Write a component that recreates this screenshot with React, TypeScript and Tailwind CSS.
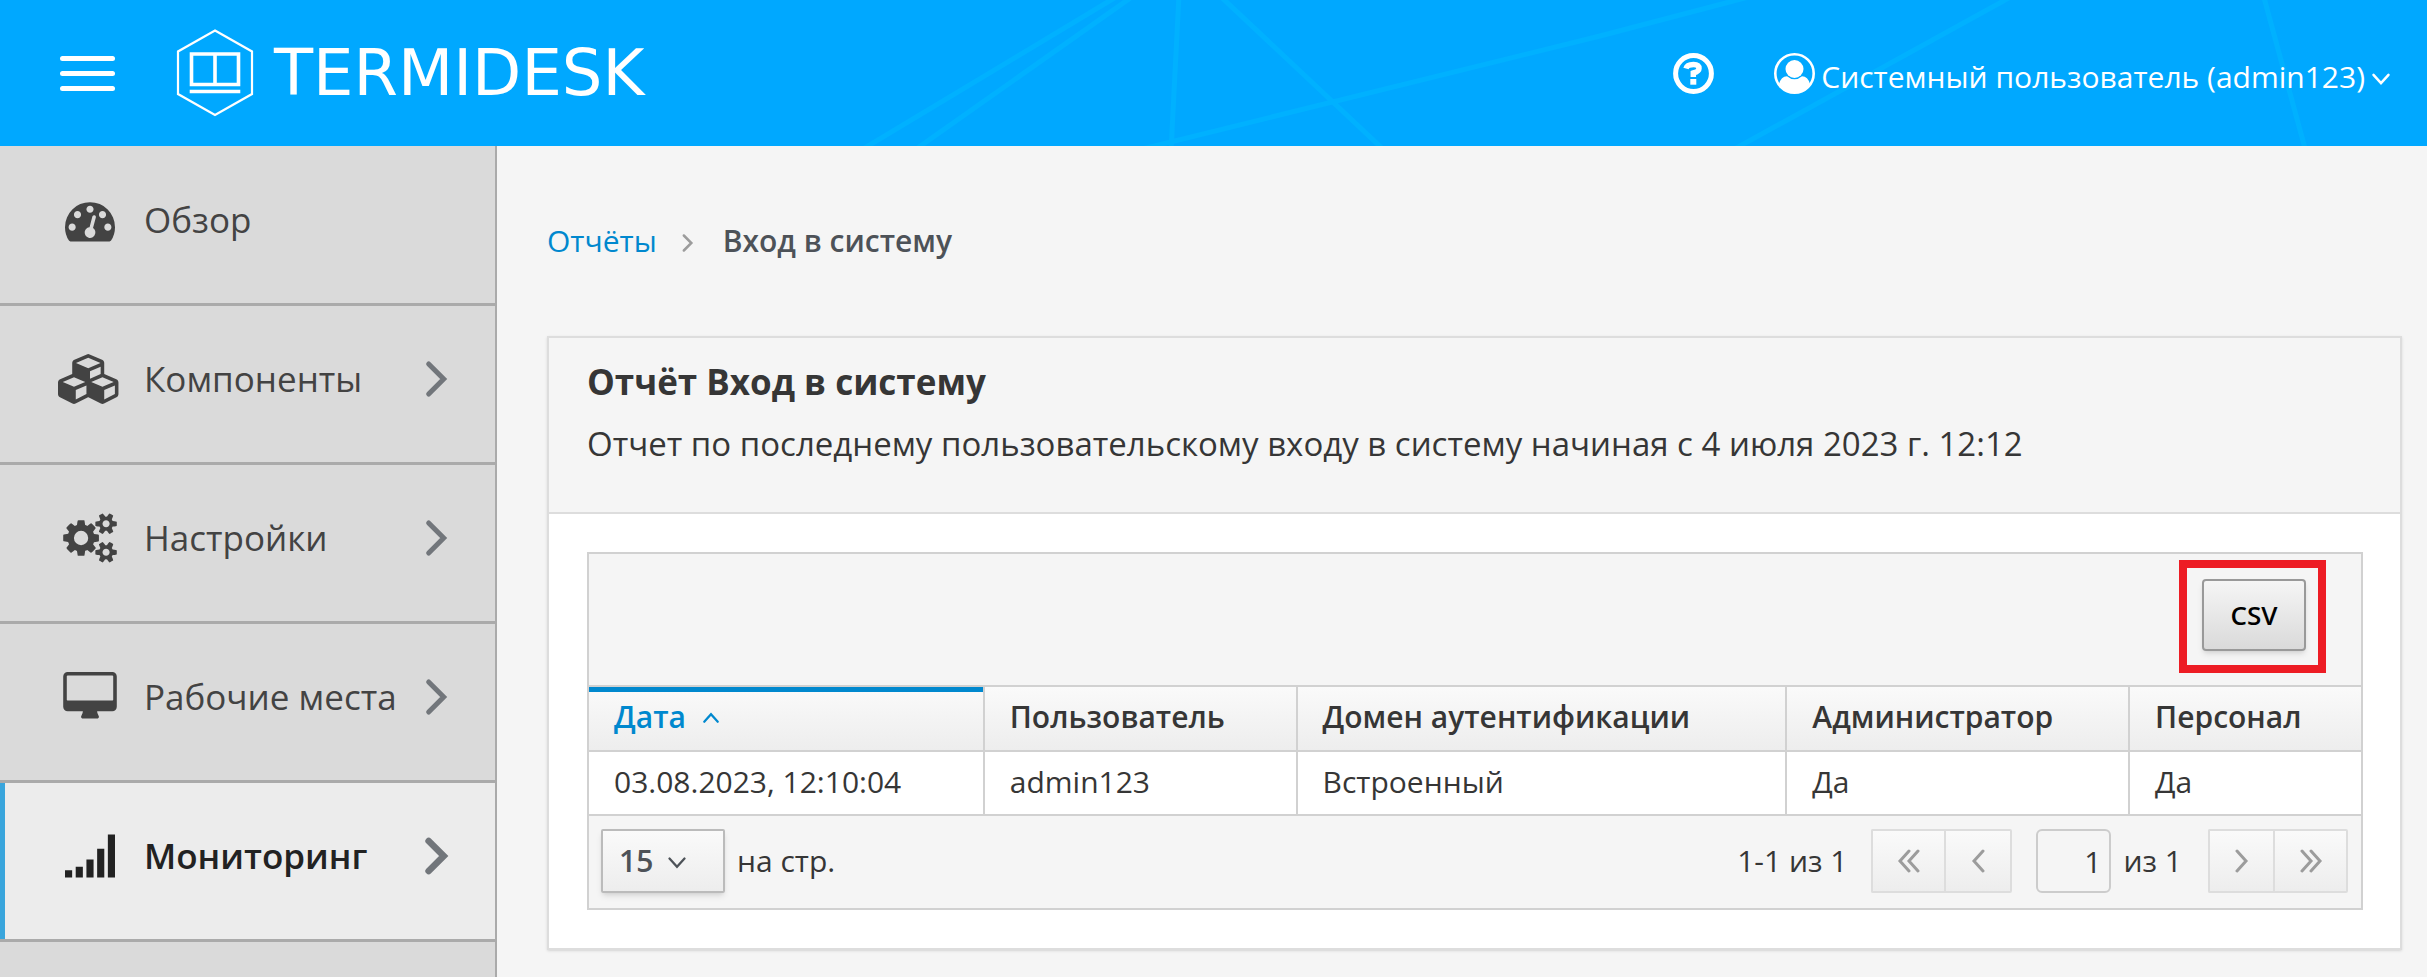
import { ReactNode } from 'react';
import clsx from 'clsx';

interface MenuItem {
  title: string;
  viewBox: string;
  iconWidth: string;
  path: string;
  hasSubmenu: boolean;
  active?: boolean;
}

const menu: MenuItem[] = [
  {
    title: 'Обзор',
    viewBox: '0 0 1792 1792',
    iconWidth: 'w-[50px]',
    path: 'M384 1152q0-53-37.5-90.5t-90.5-37.5-90.5 37.5-37.5 90.5 37.5 90.5 90.5 37.5 90.5-37.5 37.5-90.5zm192-448q0-53-37.5-90.5t-90.5-37.5-90.5 37.5-37.5 90.5 37.5 90.5 90.5 37.5 90.5-37.5 37.5-90.5zm428 481l101-382q6-26-7.5-48.5t-38.5-29.5-48 6.5-30 39.5l-101 382q-60 5-107 43.5t-63 98.5q-20 77 20 146t117 89 146-20 89-117q16-60-6-117t-72-91zm660-33q0-53-37.5-90.5t-90.5-37.5-90.5 37.5-37.5 90.5 37.5 90.5 90.5 37.5 90.5-37.5 37.5-90.5zm-640-640q0-53-37.5-90.5t-90.5-37.5-90.5 37.5-37.5 90.5 37.5 90.5 90.5 37.5 90.5-37.5 37.5-90.5zm448 192q0-53-37.5-90.5t-90.5-37.5-90.5 37.5-37.5 90.5 37.5 90.5 90.5 37.5 90.5-37.5 37.5-90.5zm320 448q0 261-141 483-19 29-54 29h-1402q-35 0-54-29-141-221-141-483 0-182 71-348t191-286 286-191 348-71 348 71 286 191 191 286 71 348z',
    hasSubmenu: false,
  },
  {
    title: 'Компоненты',
    viewBox: '0 0 2304 1792',
    iconWidth: 'w-16',
    path: 'M640 1632l384-192v-314l-384 164v342zm-64-454l404-173-404-173-404 173zm1088 454l384-192v-314l-384 164v342zm-64-454l404-173-404-173-404 173zm-448-293l384-165v-266l-384 164v267zm-64-379l441-189-441-189-441 189zm1088 518v416q0 36-19 67t-52 47l-448 224q-25 14-57 14t-57-14l-448-224q-4-2-7-4-2 2-7 4l-448 224q-25 14-57 14t-57-14l-448-224q-33-16-52-47t-19-67v-416q0-38 21.5-70t56.5-48l434-186v-400q0-38 21.5-70t56.5-48l448-192q23-10 50-10t50 10l448 192q35 16 56.5 48t21.5 70v400l434 186q36 16 57 48t21 70z',
    hasSubmenu: true,
  },
  {
    title: 'Настройки',
    viewBox: '0 0 1920 1792',
    iconWidth: 'w-[54px]',
    path: 'M896 896q0-106-75-181t-181-75-181 75-75 181 75 181 181 75 181-75 75-181zm768 512q0-52-38-90t-90-38-90 38-38 90q0 53 37.5 90.5t90.5 37.5 90.5-37.5 37.5-90.5zm0-1024q0-52-38-90t-90-38-90 38-38 90q0 53 37.5 90.5t90.5 37.5 90.5-37.5 37.5-90.5zm-384 421v185q0 10-7 19.5t-16 10.5l-155 24q-11 35-32 76 34 48 90 115 7 11 7 20 0 12-7 19-23 30-82.5 89.5t-78.5 59.5q-11 0-21-7l-115-90q-37 19-77 31-11 108-23 155-7 24-30 24h-186q-11 0-20-7.5t-10-17.5l-23-153q-34-10-75-31l-118 89q-7 7-20 7-11 0-21-8-144-133-144-160 0-9 7-19 10-14 41-53t47-61q-23-44-35-82l-152-24q-10-1-17-9.5t-7-19.5v-185q0-10 7-19.5t16-10.5l155-24q11-35 32-76-34-48-90-115-7-11-7-20 0-12 7-20 22-30 82-89t79-59q11 0 21 7l115 90q34-18 77-32 11-108 23-154 7-24 30-24h186q11 0 20 7.5t10 17.5l23 153q34 10 75 31l118-89q8-7 20-7 11 0 21 8 144 133 144 160 0 8-7 19-12 16-42 54t-45 60q23 48 34 82l152 23q10 2 17 10.5t7 19.5zm640 533v140q0 16-149 31-12 27-30 52 51 113 51 138 0 4-4 7-122 71-124 71-8 0-46-47t-52-68q-20 2-30 2t-30-2q-14 21-52 68t-46 47q-2 0-124-71-4-3-4-7 0-25 51-138-18-25-30-52-149-15-149-31v-140q0-16 149-31 13-29 30-52-51-113-51-138 0-4 4-7 4-2 35-20t59-34 30-16q8 0 46 46.5t52 67.5q20-2 30-2t30 2q51-71 92-112l6-2q4 0 124 70 4 3 4 7 0 25-51 138 17 23 30 52 149 15 149 31zm0-1024v140q0 16-149 31-12 27-30 52 51 113 51 138 0 4-4 7-122 71-124 71-8 0-46-47t-52-68q-20 2-30 2t-30-2q-14 21-52 68t-46 47q-2 0-124-71-4-3-4-7 0-25 51-138-18-25-30-52-149-15-149-31v-140q0-16 149-31 13-29 30-52-51-113-51-138 0-4 4-7 4-2 35-20t59-34 30-16q8 0 46 46.5t52 67.5q20-2 30-2t30 2q51-71 92-112l6-2q4 0 124 70 4 3 4 7 0 25-51 138 17 23 30 52 149 15 149 31z',
    hasSubmenu: true,
  },
  {
    title: 'Рабочие места',
    viewBox: '0 0 1920 1792',
    iconWidth: 'w-[54px]',
    path: 'M1792 992v-832q0-13-9.500-22.500t-22.500-9.500h-1600q-13 0-22.500 9.500t-9.500 22.500v832q0 13 9.500 22.500t22.500 9.500h1600q13 0 22.500-9.500t9.500-22.500zm128-832v1088q0 66-47 113t-113 47h-544q0 37 16 77.500t32 71 16 43.500q0 26-19 45t-45 19h-512q-26 0-45-19t-19-45q0-14 16-44t32-70 16-78h-544q-66 0-113-47t-47-113v-1088q0-66 47-113t113-47h1600q66 0 113 47t47 113z',
    hasSubmenu: true,
  },
  {
    title: 'Мониторинг',
    viewBox: '0 0 1792 1792',
    iconWidth: 'w-[50px]',
    path: 'M0 1408h256v256h-256zM384 1280h256v384h-256zM768 1024h256v640h-256zM1152 640h256v1024h-256zM1536 128h256v1536h-256z',
    hasSubmenu: true,
    active: true,
  },
];

const columns = [
  { title: 'Дата', width: 'w-[395px]', sorted: true },
  { title: 'Пользователь', width: 'w-[313px]' },
  { title: 'Домен аутентификации', width: 'w-[490px]' },
  { title: 'Администратор', width: 'w-[343px]' },
  { title: 'Персонал', width: 'w-[232px]' },
];

const rows = [['03.08.2023, 12:10:04', 'admin123', 'Встроенный', 'Да', 'Да']];

const Stroke = ({ points, className, width = 2 }: { points: string[]; className: string; width?: number }) => (
  <svg viewBox="0 0 24 24" fill="none" stroke="currentColor" strokeWidth={width} strokeLinecap="round" className={className} aria-hidden="true">
    {points.map((p) => (
      <polyline key={p} points={p} />
    ))}
  </svg>
);

const Logo = () => (
  <a href="#" className="ml-[61px] flex items-center gap-5 text-white">
    <svg viewBox="0 0 78 90" className="h-[90px] w-[78px]" fill="none" stroke="currentColor" aria-hidden="true">
      <path d="M39 2.500L76 23.500V66L39 87L2 66V23.500Z" strokeWidth="2.200" />
      <path d="M15.500 26H62.500V56.500H15.500ZM39 26V56.500" strokeWidth="3.600" />
      <path d="M13.700 63.500H64.300" strokeWidth="3.500" />
    </svg>
    <span className="font-['DejaVu_Sans',sans-serif] text-[64px] leading-none">TERMIDESK</span>
  </a>
);

const Header = () => (
  <header className="relative flex h-[146px] items-center bg-[#00a8ff] text-white">
    <svg className="absolute inset-0 h-full w-full" viewBox="0 0 2427 146" preserveAspectRatio="xMaxYMid slice" stroke="#00b1ff" strokeWidth="5" aria-hidden="true">
      <path d="M1121 -6L858 152M1136 -6L912 152M1179 -6L1171 152M1218 -6L1386 152M1130 152L1600 36L1760 -6M2016 -6L1729 152M2263 -6L2306 152" fill="none" />
    </svg>
    <div className="relative flex w-full items-center pr-9 pl-[60px]">
      <button type="button" aria-label="Меню" className="flex flex-col gap-[10px]">
        <span className="h-[5px] w-[55px] rounded-full bg-white" />
        <span className="h-[5px] w-[55px] rounded-full bg-white" />
        <span className="h-[5px] w-[55px] rounded-full bg-white" />
      </button>
      <Logo />
      <button type="button" aria-label="Справка" className="mr-[60px] ml-auto">
        <svg viewBox="0 0 41 41" className="size-[41px]" fill="none" stroke="currentColor" aria-hidden="true">
          <circle cx="20.500" cy="20.500" r="17.900" strokeWidth="5" />
          <path d="M13 15.500Q14 11.500 20.500 11.500Q26 11.500 26 15.500Q26 18.500 20.300 20V24" strokeWidth="5.500" />
          <path d="M20.300 26V31.700" strokeWidth="6" />
        </svg>
      </button>
      <button type="button" className="flex items-center gap-[6px] text-[30px] leading-10">
        <svg viewBox="0 0 41 41" className="size-[41px]" aria-hidden="true">
          <circle cx="20.500" cy="20.500" r="19.200" fill="none" stroke="currentColor" strokeWidth="2.600" />
          <circle cx="20.500" cy="16" r="9" fill="currentColor" />
          <path d="M5 31Q7 23.500 13 23.200Q20.500 29.500 28 23.200Q34 23.500 36 31Q30 40 20.500 40Q11 40 5 31Z" fill="currentColor" />
        </svg>
        <span className="pt-2">Системный пользователь (admin123)</span>
        <Stroke points={['3,7 12,17 21,7']} width={3} className="mt-3 size-5" />
      </button>
    </div>
  </header>
);

const Sidebar = () => (
  <nav className="w-[497px] shrink-0 border-r-2 border-[#aaa] bg-[#dadada] pt-px">
    <ul>
      {menu.map((item) => (
        <li key={item.title}>
          <a
            href="#"
            className={clsx(
              'relative flex items-center border-b-3 border-[#aaa] pt-[49px] pr-[38px] pb-[59px] pl-[58px] text-[35px] leading-12',
              item.active ? 'bg-[#ececec] font-semibold text-[#222]' : 'text-[#434343]'
            )}
          >
            {item.active && <span className="absolute inset-y-0 left-0 w-[5px] bg-[#39a5dc]" />}
            <span className="mr-[22px] flex h-12 w-16 items-center justify-center">
              <svg viewBox={item.viewBox} className={clsx('h-[50px] shrink-0', item.iconWidth)} fill="currentColor" aria-hidden="true">
                <path d={item.path} />
              </svg>
            </span>
            <span className="grow whitespace-nowrap">{item.title}</span>
            {item.hasSubmenu && (
              <Stroke points={['7,3 16,12 7,21']} width={item.active ? 4 : 3} className="size-10 text-[#72767b]" />
            )}
          </a>
        </li>
      ))}
    </ul>
  </nav>
);

const PageButton = ({ label, children, className }: { label: string; children: ReactNode; className: string }) => (
  <button
    type="button"
    aria-label={label}
    className={clsx(
      'flex h-16 items-center justify-center border-2 border-[#ddd] bg-linear-to-b from-[#fafafa] to-[#ededed] text-[#9c9c9c]',
      className
    )}
  >
    {children}
  </button>
);

const Pagination = () => (
  <div className="flex items-center bg-[#f5f5f5] pt-[13px] pr-[13px] pb-[15px] pl-3 text-[30px] leading-10">
    <div className="relative flex items-center">
      <select
        id="page-size"
        defaultValue="15"
        className="h-16 w-[124px] appearance-none rounded-xs border-2 border-[#bbb] bg-linear-to-b from-[#fafafa] to-[#ededed] pl-4 font-semibold text-[#4d5258] shadow-md"
      >
        <option>15</option>
      </select>
      <Stroke points={['2,6 12,17 22,6']} width={3} className="pointer-events-none absolute left-[67px] mt-1 size-[18px] text-[#4d5258]" />
    </div>
    <label htmlFor="page-size" className="ml-3">на стр.</label>
    <span className="mr-6 ml-auto">1-1 из 1</span>
    <div className="flex">
      <PageButton label="Первая страница" className="w-[73px] rounded-l-xs border-r-0">
        <Stroke points={['12,2 3,12 12,22', '21,2 12,12 21,22']} width={3} className="size-6" />
      </PageButton>
      <PageButton label="Предыдущая страница" className="w-[68px] rounded-r-xs">
        <Stroke points={['17,2 8,12 17,22']} width={3} className="size-6" />
      </PageButton>
    </div>
    <input
      id="page-number"
      defaultValue="1"
      className="mr-3 ml-6 h-16 w-[75px] rounded-md border-2 border-[#ccc] pr-2 text-right"
    />
    <label htmlFor="page-number" className="mr-[26px]">из 1</label>
    <div className="flex">
      <PageButton label="Следующая страница" className="w-[65px] rounded-l-xs border-r-0">
        <Stroke points={['7,2 16,12 7,22']} width={3} className="size-6" />
      </PageButton>
      <PageButton label="Последняя страница" className="w-[75px] rounded-r-xs">
        <Stroke points={['3,2 12,12 3,22', '12,2 21,12 12,22']} width={3} className="size-6" />
      </PageButton>
    </div>
  </div>
);

const ReportTable = () => (
  <div className="border-2 border-[#d1d1d1]">
    <div className="flex justify-end border-b-2 border-[#d1d1d1] bg-[#f5f5f5] pt-[25px] pr-[55px] pb-[34px]">
      <div className="relative">
        <button
          type="button"
          className="h-[72px] w-[104px] rounded-sm border-2 border-[#999] bg-linear-to-b from-[#f5f5f5] to-[#dadada] text-[26px] font-semibold text-black shadow-md"
        >
          CSV
        </button>
        <div className="pointer-events-none absolute -top-[19px] -right-5 -bottom-[22px] -left-[23px] border-8 border-[#ed1c24]" />
      </div>
    </div>
    <table className="w-full text-left text-[30px] leading-10">
      <thead>
        <tr className="bg-linear-to-b from-[#fafafa] to-[#ededed]">
          {columns.map((col) => (
            <th
              key={col.title}
              className={clsx(
                'relative border-r-2 border-b-2 border-[#d1d1d1] px-[25px] pt-[10px] pb-[13px] font-semibold whitespace-nowrap last:border-r-0',
                col.width,
                col.sorted && 'text-[#0088ce]'
              )}
            >
              {col.sorted && <span className="absolute inset-x-0 top-0 h-[5px] bg-[#0088ce]" />}
              {col.title}
              {col.sorted && <Stroke points={['3,17 12,7 21,17']} width={3} className="mb-1 ml-4 inline size-[18px]" />}
            </th>
          ))}
        </tr>
      </thead>
      <tbody>
        {rows.map((row) => (
          <tr key={row[0]} className="bg-white">
            {row.map((cell, index) => (
              <td key={index} className="border-r-2 border-b-2 border-[#d1d1d1] px-[25px] pt-[10px] pb-3 whitespace-nowrap last:border-r-0">
                {cell}
              </td>
            ))}
          </tr>
        ))}
      </tbody>
    </table>
    <Pagination />
  </div>
);

const App = () => {
  return (
    <div className="flex min-h-screen flex-col bg-[#f5f5f5] font-['Open_Sans',sans-serif] text-[#363636]">
      <Header />
      <div className="flex grow">
        <Sidebar />
        <main className="grow pt-[75px] pr-[25px] pl-[50px]">
          {/* Хлебные крошки */}
          <div className="flex items-center text-[30px] leading-10">
            <a href="#" className="text-[#0088ce]">Отчёты</a>
            <Stroke points={['7,3 16,12 7,21']} width={3} className="mx-[21px] mt-1 size-5 text-[#9c9c9c]" />
            <span className="ml-1 font-semibold text-[#4d5258]">Вход в систему</span>
          </div>

          <section className="mt-[75px] border-2 border-[#ddd] bg-white shadow-sm">
            <div className="border-b-2 border-[#ddd] bg-[#f5f5f5] px-[38px] pt-5 pb-11">
              <h1 className="text-[35px] leading-12 font-bold">Отчёт Вход в систему</h1>
              <p className="mt-[14px] text-[33px] leading-12">
                Отчет по последнему пользовательскому входу в систему начиная с 4 июля 2023 г. 12:12
              </p>
            </div>
            <div className="py-[38px] pr-[37px] pl-[38px]">
              <ReportTable />
            </div>
          </section>
        </main>
      </div>
    </div>
  );
};

export default App;
